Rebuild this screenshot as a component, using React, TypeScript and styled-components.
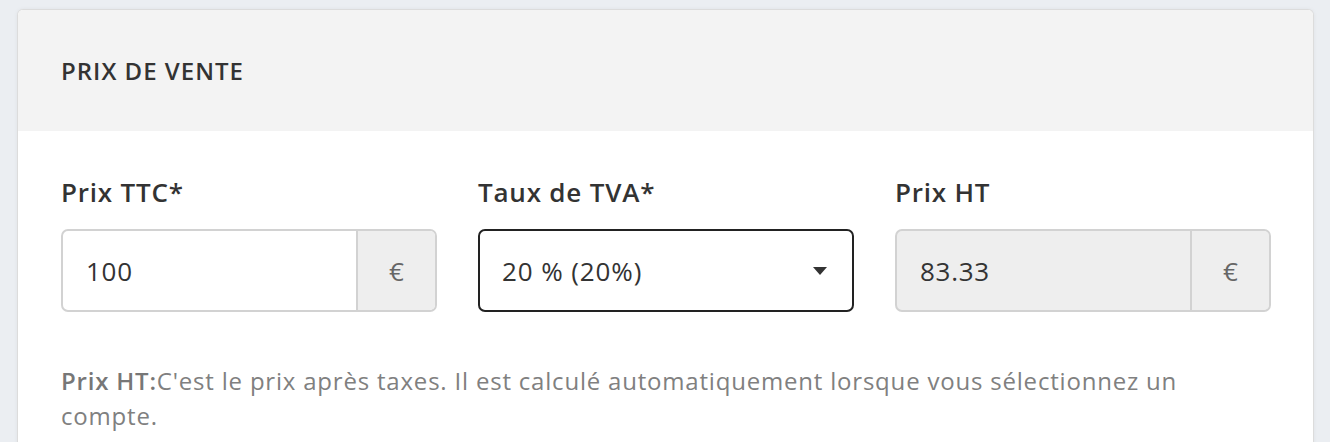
import React from "react";
import styled, { createGlobalStyle } from "styled-components";

const GlobalStyle = createGlobalStyle`
  html, body {
    margin: 0;
    padding: 0;
    background: #ebeef2;
    font-family: "Open Sans", "Noto Sans", Arial, sans-serif;
  }
`;

const Page = styled.div`
  padding: 9px 16px 0 17px;
`;

const Card = styled.section`
  width: 1297px;
  box-sizing: border-box;
  background: #fff;
  border: 1px solid #dcdcdc;
  border-bottom: none;
  border-radius: 6px 6px 0 0;
  box-shadow: 0 0 4px rgba(0, 0, 0, 0.05);
  overflow: hidden;
`;

const CardHeader = styled.div`
  height: 121px;
  display: flex;
  align-items: center;
  padding: 0 43px;
  background: #f3f3f3;
`;

const Title = styled.h2`
  margin: 0;
  font-size: 24px;
  line-height: 1;
  font-weight: 600;
  color: #333;
  letter-spacing: 1px;
`;

const CardBody = styled.div`
  padding: 43px 41px 40px 43px;
`;

const Fields = styled.div`
  display: grid;
  grid-template-columns: repeat(3, 376px);
  column-gap: 41px;
`;

const Field = styled.div`
  display: flex;
  flex-direction: column;
`;

const Label = styled.label`
  font-size: 26px;
  line-height: 36px;
  font-weight: 600;
  color: #333;
  letter-spacing: 0.8px;
  margin-bottom: 19px;
`;

const InputGroup = styled.div<{ $disabled?: boolean }>`
  display: flex;
  height: 83px;
  box-sizing: border-box;
  border: 2px solid #d2d2d2;
  border-radius: 7px;
  overflow: hidden;
  background: ${(p) => (p.$disabled ? "#eeeeee" : "#fff")};
`;

const Input = styled.input`
  flex: 1;
  min-width: 0;
  border: none;
  outline: none;
  background: transparent;
  padding: 0 0 0 23px;
  font-family: inherit;
  font-size: 26px;
  letter-spacing: 0.7px;
  color: #333;
`;

const Addon = styled.span`
  width: 77px;
  flex: none;
  display: flex;
  align-items: center;
  justify-content: center;
  background: #eeeeee;
  border-left: 2px solid #d2d2d2;
  font-size: 26px;
  color: #666;
`;

const Select = styled.div`
  height: 83px;
  box-sizing: border-box;
  display: flex;
  align-items: center;
  justify-content: space-between;
  padding: 0 25px 0 22px;
  border: 2px solid #222;
  border-radius: 7px;
  font-size: 26px;
  letter-spacing: 0.9px;
  color: #333;
  cursor: pointer;
`;

const Caret = styled.svg`
  width: 14px;
  height: 8px;
  margin-bottom: -1px;
`;

const Help = styled.p`
  margin: 51px 0 0;
  max-width: 1160px;
  font-size: 24px;
  line-height: 35px;
  letter-spacing: 0.8px;
  color: #808080;

  strong {
    font-weight: 600;
    color: #777;
  }
`;

const App = () => {
  return (
    <>
      <GlobalStyle />
      <Page>
        <Card>
          <CardHeader>
            <Title>PRIX DE VENTE</Title>
          </CardHeader>
          <CardBody>
            <Fields>
              <Field>
                <Label>Prix TTC*</Label>
                <InputGroup>
                  <Input defaultValue="100" />
                  <Addon>€</Addon>
                </InputGroup>
              </Field>
              <Field>
                <Label>Taux de TVA*</Label>
                <Select>
                  <span>20 % (20%)</span>
                  <Caret viewBox="0 0 14 8">
                    <path d="M0 0 H14 L7 8 Z" fill="#333" />
                  </Caret>
                </Select>
              </Field>
              <Field>
                <Label>Prix HT</Label>
                <InputGroup $disabled>
                  <Input value="83.33" readOnly />
                  <Addon>€</Addon>
                </InputGroup>
              </Field>
            </Fields>
            <Help>
              <strong>Prix HT:</strong>C'est le prix après taxes. Il est calculé automatiquement lorsque vous sélectionnez un compte.
            </Help>
          </CardBody>
        </Card>
      </Page>
    </>
  );
};

export default App;
